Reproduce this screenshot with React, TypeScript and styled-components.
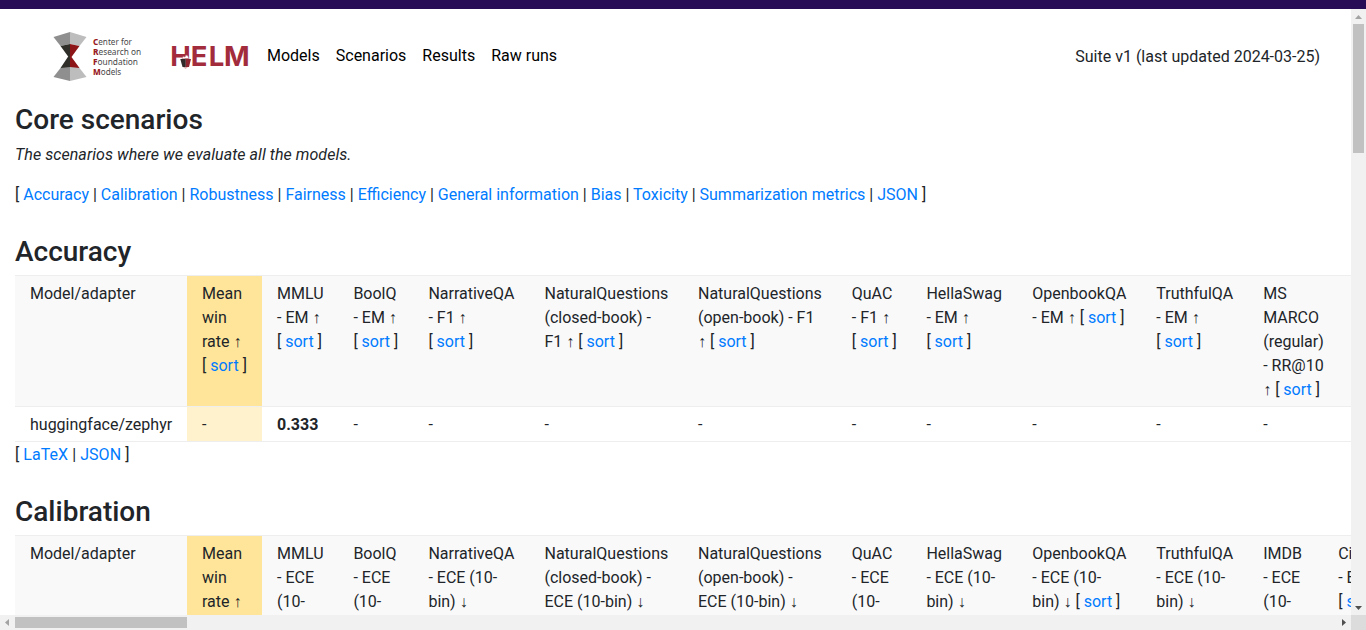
import React from 'react';
import styled, { createGlobalStyle, css } from 'styled-components';

const GlobalStyle = createGlobalStyle`
  *, *::before, *::after { box-sizing: border-box; }
  html, body { margin: 0; height: 100%; overflow: hidden; }
  body {
    font-family: Roboto, "Liberation Sans", sans-serif;
    font-size: 16px;
    line-height: 24px;
    color: #212529;
    background: #fff;
  }
`;

const Page = styled.div`
  height: 630px;
  width: 1366px;
  display: flex;
  flex-direction: column;
`;

const TopStrip = styled.div`
  flex: none;
  height: 9px;
  background: #280c56;
`;

const Frame = styled.div`
  flex: none;
  height: 621px;
  display: grid;
  grid-template-columns: 1351px 15px;
  grid-template-rows: 606px 15px;
`;

const Viewport = styled.main`
  overflow: hidden;
  padding-left: 15px;
`;

const Header = styled.header`
  height: 92.4px;
  padding: 0 31px 0 38px;
  display: flex;
  align-items: flex-start;
`;

const CrfmLogo = styled.svg`
  display: block;
  flex: none;
  margin-top: 21px;
`;

const HelmLogo = styled.svg`
  display: block;
  flex: none;
  margin: 34px 0 0 26px;
  overflow: visible;
`;

const Nav = styled.nav`
  display: flex;
  gap: 16px;
  margin: 34.5px 0 0 17px;
`;

const NavLink = styled.a`
  color: #000;
  text-decoration: none;
`;

const Suite = styled.div`
  margin: 35.5px 0 0 auto;
`;

const Title = styled.h3`
  margin: 0 0 6px;
  padding-top: 2px;
  font-size: 28px;
  font-weight: 500;
  line-height: 33.6px;
`;

const Description = styled.p`
  margin: 0 0 16px;
  font-style: italic;
  letter-spacing: 0.06px;
`;

const Section = styled.section`
  margin-top: 26.4px;
`;

const Links = styled.div<{ $loose?: boolean }>`
  letter-spacing: ${p => (p.$loose ? '0.05px' : 'normal')};
`;

const Link = styled.a`
  color: #007bff;
  text-decoration: none;
`;

const Table = styled.div`
  width: 1500px;
  margin-bottom: 1px;
  border-bottom: 1px solid #eee;
`;

const Row = styled.div<{ $head?: boolean }>`
  display: grid;
  grid-template-columns: 172px 75px 76.4px 75px 116.1px 153.5px 153.8px 74.6px 105.9px 124px 106.9px 75px 1fr;
  border-top: 1px solid #eee;
  background: ${p => (p.$head ? '#f9f9f9' : '#fff')};
`;

const Cell = styled.div<{ $highlight?: 'head' | 'body'; $bold?: boolean }>`
  padding: 6px 0 4px 15px;
  white-space: nowrap;
  ${p => p.$highlight && css`background: ${p.$highlight === 'head' ? '#ffe599' : '#fff2cc'};`}
  ${p => p.$bold && css`font-weight: 700;`}
`;

const Track = styled.div<{ $horizontal?: boolean }>`
  display: flex;
  flex-direction: ${p => (p.$horizontal ? 'row' : 'column')};
  background: #f1f1f1;
`;

const Thumb = styled.div<{ $horizontal?: boolean }>`
  flex: none;
  background: #c1c1c1;
  ${p => p.$horizontal
    ? css`width: 172px; height: 11px; margin: 2px auto 0 0;`
    : css`height: 129px; width: 11px; margin: 0 0 auto 2px;`}
`;

const ArrowIcon = styled.svg`
  display: block;
  flex: none;
`;

const Corner = styled.div`
  background: #dcdcdc;
`;

function Arrow({ points, fill }: { points: string; fill: string }) {
  return (
    <ArrowIcon width="15" height="15" viewBox="0 0 15 15">
      <polygon points={points} fill={fill} />
    </ArrowIcon>
  );
}

function LinkList({ items, loose }: { items: string[]; loose?: boolean }) {
  return (
    <Links $loose={loose}>
      {'[ '}
      {items.map((item, i) => (
        <React.Fragment key={item}>
          {i > 0 && ' | '}
          <Link>{item}</Link>
        </React.Fragment>
      ))}
      {' ]'}
    </Links>
  );
}

/* "@sort" in a header line marks the place of its sort link. */
function HeaderLine({ text }: { text: string }) {
  const [before, after] = text.split('@sort');
  return (
    <div>
      {before}
      {after !== undefined && <>[ <Link>sort</Link> ]</>}
    </div>
  );
}

function HeadRow({ columns }: { columns: string[][] }) {
  return (
    <Row $head>
      {columns.map((lines, i) => (
        <Cell key={i} $highlight={i === 1 ? 'head' : undefined}>
          {lines.map(line => <HeaderLine key={line} text={line} />)}
        </Cell>
      ))}
    </Row>
  );
}

const metrics = ['Accuracy', 'Calibration', 'Robustness', 'Fairness', 'Efficiency',
  'General information', 'Bias', 'Toxicity', 'Summarization metrics', 'JSON'];

const accuracy = [
  ['Model/adapter'],
  ['Mean', 'win', 'rate ↑', '@sort'],
  ['MMLU', '- EM ↑', '@sort'],
  ['BoolQ', '- EM ↑', '@sort'],
  ['NarrativeQA', '- F1 ↑', '@sort'],
  ['NaturalQuestions', '(closed-book) -', 'F1 ↑ @sort'],
  ['NaturalQuestions', '(open-book) - F1', '↑ @sort'],
  ['QuAC', '- F1 ↑', '@sort'],
  ['HellaSwag', '- EM ↑', '@sort'],
  ['OpenbookQA', '- EM ↑ @sort'],
  ['TruthfulQA', '- EM ↑', '@sort'],
  ['MS', 'MARCO', '(regular)', '- RR@10', '↑ @sort'],
];

const calibration = [
  ['Model/adapter'],
  ['Mean', 'win', 'rate ↑'],
  ['MMLU', '- ECE', '(10-'],
  ['BoolQ', '- ECE', '(10-'],
  ['NarrativeQA', '- ECE (10-', 'bin) ↓'],
  ['NaturalQuestions', '(closed-book) -', 'ECE (10-bin) ↓'],
  ['NaturalQuestions', '(open-book) -', 'ECE (10-bin) ↓'],
  ['QuAC', '- ECE', '(10-'],
  ['HellaSwag', '- ECE (10-', 'bin) ↓'],
  ['OpenbookQA', '- ECE (10-', 'bin) ↓ @sort'],
  ['TruthfulQA', '- ECE (10-', 'bin) ↓'],
  ['IMDB', '- ECE', '(10-'],
  ['CivilComments', '- ECE (10-bin) ↓', '@sort'],
];

const zephyr = ['huggingface/zephyr', '-', '0.333', '-', '-', '-', '-', '-', '-', '-', '-', '-'];

const crfmWords = [['C', 'enter for', 39], ['R', 'esearch on', 48.2], ['F', 'oundation', 45], ['M', 'odels', 28.2]] as const;

function Crfm() {
  return (
    <CrfmLogo width="92" height="54" viewBox="53 30 92 54">
      <path d="M53.5 37 70 32V44L60.5 46Z" fill="#8f8f8f" />
      <path d="M70 32 86.5 37 79.5 46 70 44Z" fill="#bdbdbd" />
      <path d="M60.5 46 70 44V57H68.5Z M68.5 56H70V68.5L60.5 68Z" fill="#2f2e29" />
      <path d="M70 44 79.5 46 71.5 57 79.5 68 70 68.5Z" fill="#8d1518" />
      <path d="M60.5 68 70 67V81L53.5 77Z" fill="#8f8f8f" />
      <path d="M70 67 79.5 68 86.5 77 70 81Z" fill="#bdbdbd" />
      <g fontFamily="'Noto Sans', 'Open Sans', sans-serif" fontSize="9.5" fill="#484848">
        {crfmWords.map(([first, rest, width], i) => (
          <text key={first} x="93" y={45 + i * 9.9} textLength={width} lengthAdjust="spacingAndGlyphs">
            <tspan fill="#991b1e" fontWeight="800">{first}</tspan>{rest}
          </text>
        ))}
      </g>
    </CrfmLogo>
  );
}

function Helm() {
  return (
    <HelmLogo width="79" height="27" viewBox="171 43 79 27">
      <text x="170.3 190.7 208.7 223.9" y="66"
        fontFamily="Inter, sans-serif" fontWeight="700" fontSize="27.5" fill="#a22c3c">HELM</text>
      <path d="M179.5 59H191.5L189.5 68H182Z" fill="#fff" />
      <path d="M180.3 59H185.8V67H182.5Z" fill="#302a2b" />
      <path d="M185.8 59H191L189 67H185.8Z" fill="#8f2530" />
      <path d="M182 58.5 183 56.5 185 57 186 55 188 56 189 58.5Z" fill="#fff" stroke="#b76b74" strokeWidth=".5" />
      <path d="M183 67H188L185.5 69Z" fill="#ddb5b9" />
    </HelmLogo>
  );
}

export default function App() {
  return (
    <>
      <GlobalStyle />
      <Page>
        <TopStrip />
        <Frame>
          <Viewport>
            <Header>
              <Crfm />
              <Helm />
              <Nav>
                {['Models', 'Scenarios', 'Results', 'Raw runs'].map(label => (
                  <NavLink key={label}>{label}</NavLink>
                ))}
              </Nav>
              <Suite>Suite v1 (last updated 2024-03-25)</Suite>
            </Header>
            <Title>Core scenarios</Title>
            <Description>The scenarios where we evaluate all the models.</Description>
            <LinkList items={metrics} />
            <Section>
              <Title>Accuracy</Title>
              <Table>
                <HeadRow columns={accuracy} />
                <Row>
                  {zephyr.map((value, i) => (
                    <Cell key={i} $highlight={i === 1 ? 'body' : undefined} $bold={i === 2}>{value}</Cell>
                  ))}
                </Row>
              </Table>
              <LinkList items={['LaTeX', 'JSON']} loose />
            </Section>
            <Section>
              <Title>Calibration</Title>
              <Table>
                <HeadRow columns={calibration} />
              </Table>
            </Section>
          </Viewport>
          <Track>
            <Arrow points="4,10 11,10 7.5,6" fill="#a3a3a3" />
            <Thumb />
            <Arrow points="4,6 11,6 7.5,10" fill="#505050" />
          </Track>
          <Track $horizontal>
            <Arrow points="9,4 9,11 5,7.5" fill="#a3a3a3" />
            <Thumb $horizontal />
            <Arrow points="6,4 6,11 10,7.5" fill="#505050" />
          </Track>
          <Corner />
        </Frame>
      </Page>
    </>
  );
}
